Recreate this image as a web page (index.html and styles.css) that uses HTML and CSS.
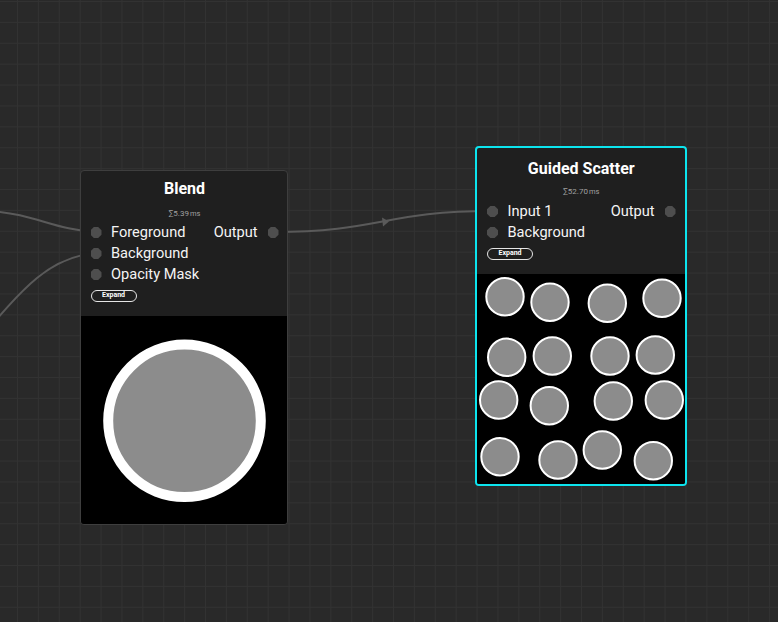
FILE: index.html
```html
<!DOCTYPE html>
<html>
<head>
<meta charset="utf-8">
<link rel="stylesheet" href="styles.css">
</head>
<body>
<div class="canvas">
  <svg class="wires" width="778" height="622" viewBox="0 0 778 622">
    <path d="M -10 211 C 35 214 55 230 96 232" />
    <path d="M -25 345 C 25 285 50 257 96 253" />
    <path d="M 273 232 C 380 232 385 211 492 211" />
    <polygon points="382,217.5 389,221.5 383,226.5" />
  </svg>

  <div class="node node-blend">
    <div class="node-head">
      <div class="title">Blend</div>
      <div class="time">∑5.39<span class="ms">ms</span></div>
      <div class="ports">
        <div class="col">
          <div class="port"><span class="dot"></span>Foreground</div>
          <div class="port"><span class="dot"></span>Background</div>
          <div class="port"><span class="dot"></span>Opacity Mask</div>
        </div>
        <div class="col out">
          <div class="port">Output<span class="dot"></span></div>
        </div>
      </div>
      <div class="expand">Expand</div>
    </div>
    <div class="preview">
      <svg width="206" height="208" viewBox="0 0 206 208">
        <circle cx="103.5" cy="104.8" r="76.3" fill="#8c8c8c" stroke="#ffffff" stroke-width="10"/>
      </svg>
    </div>
  </div>

  <div class="node node-scatter">
    <div class="node-head">
      <div class="title">Guided Scatter</div>
      <div class="time">∑52.70<span class="ms">ms</span></div>
      <div class="ports">
        <div class="col">
          <div class="port"><span class="dot"></span>Input 1</div>
          <div class="port"><span class="dot"></span>Background</div>
        </div>
        <div class="col out">
          <div class="port">Output<span class="dot"></span></div>
        </div>
      </div>
      <div class="expand">Expand</div>
    </div>
    <div class="preview">
      <svg width="208" height="209" viewBox="0 0 208 209">
        <g fill="#8c8c8c" stroke="#ffffff" stroke-width="2">
          <circle cx="28" cy="22.7" r="18.7"/>
          <circle cx="73" cy="28.3" r="18.7"/>
          <circle cx="130.3" cy="29.3" r="18.7"/>
          <circle cx="185" cy="24.3" r="18.7"/>
          <circle cx="29.7" cy="83.3" r="18.7"/>
          <circle cx="75.3" cy="82" r="18.7"/>
          <circle cx="133" cy="82" r="18.7"/>
          <circle cx="178.3" cy="81" r="18.7"/>
          <circle cx="21.7" cy="126" r="18.7"/>
          <circle cx="72.3" cy="131.7" r="18.7"/>
          <circle cx="136.3" cy="127" r="18.7"/>
          <circle cx="187.3" cy="126" r="18.7"/>
          <circle cx="23" cy="182.7" r="18.7"/>
          <circle cx="81" cy="186" r="18.7"/>
          <circle cx="125.3" cy="176" r="18.7"/>
          <circle cx="176.3" cy="186.7" r="18.7"/>
        </g>
      </svg>
    </div>
  </div>
</div>
</body>
</html>
```

FILE: styles.css
```css
html, body {
  margin: 0;
  padding: 0;
  width: 778px;
  height: 622px;
  overflow: hidden;
  background: #292929;
}

.canvas {
  position: relative;
  width: 778px;
  height: 622px;
  background-color: #292929;
  background-image:
    linear-gradient(to right, #323232 1px, transparent 1px),
    linear-gradient(to bottom, #323232 1px, transparent 1px);
  background-size: 20.9px 20.9px;
  background-position: 17px 1px;
  font-family: Roboto, "Liberation Sans", sans-serif;
  color: #ffffff;
}

.wires {
  position: absolute;
  left: 0;
  top: 0;
}

.wires path {
  fill: none;
  stroke: #5a5a5a;
  stroke-width: 2;
}

.wires polygon {
  fill: #5a5a5a;
}

.node {
  position: absolute;
  box-sizing: border-box;
  background: #1f1f1f;
  border-radius: 4px;
  overflow: hidden;
  display: flex;
  flex-direction: column;
}

.node-blend {
  left: 80px;
  top: 170px;
  width: 208px;
  height: 355px;
  border: 1px solid #3e3e3e;
}

.node-scatter {
  left: 475px;
  top: 146px;
  width: 212px;
  height: 340px;
  border: 2px solid #0ce4ee;
}

.node-head {
  display: flex;
  flex-direction: column;
  box-sizing: border-box;
}

.node-blend .node-head {
  padding: 8px 8.5px 0 9.5px;
  height: 145px;
}

.node-scatter .node-head {
  padding: 11px 9.5px 0 10px;
  height: 126px;
}

.title {
  font-size: 16px;
  font-weight: 700;
  line-height: 20px;
  text-align: center;
}

.time {
  font-size: 8px;
  line-height: 10px;
  color: #a0a0a0;
  text-align: center;
  margin-top: 10px;
}

.node-scatter .time {
  margin-top: 8px;
}

.time .ms {
  margin-left: 1px;
  font-size: 7.5px;
}

.ports {
  display: flex;
  justify-content: space-between;
  margin-top: 3px;
}

.node-scatter .ports {
  margin-top: 4px;
}

.col {
  display: flex;
  flex-direction: column;
}

.col.out {
  align-items: flex-end;
}

.port {
  display: flex;
  align-items: center;
  gap: 9.5px;
  font-size: 14.6px;
  line-height: 21px;
  height: 21px;
  color: #f4f4f4;
  white-space: nowrap;
}

.col.out .port {
  gap: 10px;
}

.dot {
  width: 11px;
  height: 11px;
  background: #4e4e4e;
  clip-path: polygon(30% 0, 70% 0, 100% 30%, 100% 70%, 70% 100%, 30% 100%, 0 70%, 0 30%);
  flex: none;
}

.expand {
  align-self: flex-start;
  box-sizing: border-box;
  width: 46px;
  height: 12px;
  border: 1.5px solid #e6e6e6;
  border-radius: 7px;
  font-size: 7px;
  font-weight: 700;
  line-height: 9px;
  text-align: center;
  color: #ffffff;
  margin-top: 5px;
}

.preview {
  flex: 1;
  background: #000000;
}

.preview svg {
  display: block;
}
```
